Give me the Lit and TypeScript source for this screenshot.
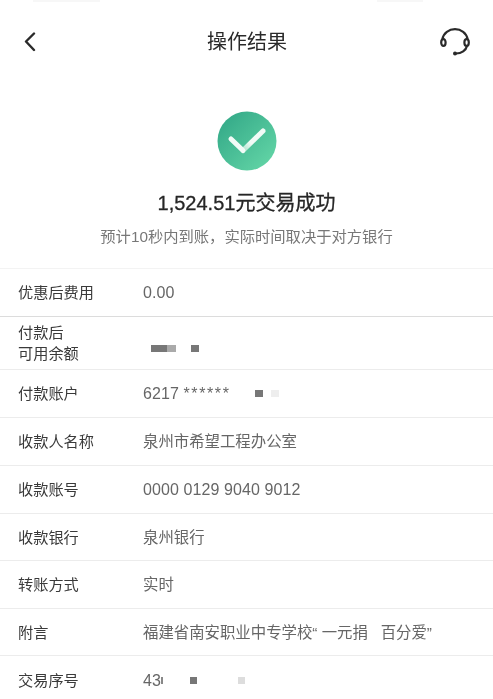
import { LitElement, html, css } from 'lit';
import { customElement } from 'lit/decorators.js';

// blobs are the mosaic patches: [width, colour, gap before]
type Blob = [number, string, number];

type Row = {
  label: string[];
  value?: string;
  stars?: string;
  blobs?: Blob[];
  h: number;
  num?: boolean;
  strong?: boolean;
  tall?: boolean;
};

const rows: Row[] = [
  { label: ['优惠后费用'], value: '0.00', num: true, h: 48, strong: true },
  { label: ['付款后', '可用余额'], blobs: [[16, '#777', 8], [9, '#aaa', 0], [8, '#777', 15]], h: 53, tall: true },
  { label: ['付款账户'], value: '6217 ', stars: '******', num: true, blobs: [[8, '#777', 24], [8, '#eee', 8]], h: 48 },
  { label: ['收款人名称'], value: '泉州市希望工程办公室', h: 48 },
  { label: ['收款账号'], value: '0000 0129 9040 9012', num: true, h: 48 },
  { label: ['收款银行'], value: '泉州银行', h: 47 },
  { label: ['转账方式'], value: '实时', h: 48 },
  { label: ['附言'], value: '福建省南安职业中专学校“ 一元捐   百分爱”', h: 47 },
  { label: ['交易序号'], value: '43', num: true, blobs: [[2, '#888', 0], [7, '#777', 27], [7, '#ddd', 41]], h: 48 },
];

@customElement('app-root')
export class AppRoot extends LitElement {
  static styles = css`
    :host {
      display: block;
      width: 493px;
      height: 699px;
      overflow: hidden;
      background: #fff;
      font-family: 'Liberation Sans', 'Noto Sans CJK SC', sans-serif;
      color: #2c2c2c;
      filter: blur(0.3px);
    }
    .status {
      height: 2px;
      display: flex;
      justify-content: space-between;
      padding: 0 70px 0 33px;
    }
    .status span {
      height: 2px;
      background: #f7f7f7;
    }
    .nav {
      height: 80px;
      display: grid;
      grid-template-columns: 1fr auto 1fr;
      align-items: center;
      padding: 0 23px 0 24px;
      box-sizing: border-box;
    }
    .nav svg { display: block; }
    .nav svg:last-child { justify-self: end; }
    .title {
      font-size: 20px;
      line-height: 24px;
      color: #2a2a2a;
    }
    .hero {
      display: flex;
      flex-direction: column;
      align-items: center;
      padding-top: 29px;
      height: 186px;
      box-sizing: border-box;
    }
    .amount {
      margin-top: 19px;
      font-size: 20px;
      line-height: 26px;
      color: #262626;
      -webkit-text-stroke: 0.3px #262626;
    }
    .sub {
      margin-top: 11px;
      font-size: 15.3px;
      line-height: 20px;
      color: #777;
    }
    .list { border-top: 1px solid #f3f3f3; }
    .row {
      display: flex;
      align-items: center;
      box-sizing: border-box;
      padding-left: 18px;
      border-bottom: 1px solid #ececec;
    }
    .row.strong { border-bottom-color: #dcdcdc; }
    .row:last-child { border-bottom: none; }
    .label {
      width: 125px;
      flex: none;
      font-size: 15.2px;
      line-height: 21px;
      color: #3a3a3a;
    }
    .value {
      display: flex;
      align-items: center;
      font-size: 15.4px;
      line-height: 21px;
      color: #666;
    }
    .value.num { font-size: 16px; letter-spacing: 0.1px; }
    .row.tall .value { margin-top: 11px; }
    .text { white-space: pre; }
    .stars { letter-spacing: 1.6px; }
    .blob {
      display: inline-block;
      height: 7px;
    }
  `;

  render() {
    return html`
      <div class="status">
        <span style="width:67px"></span>
        <span style="width:46px"></span>
      </div>
      <div class="nav">
        <svg width="16" height="20" viewBox="0 0 16 20" fill="none" stroke="#2a2a2a" stroke-width="2.4" stroke-linecap="round" stroke-linejoin="round">
          <path d="M10 1.5 L2 9.5 L10 18" />
        </svg>
        <div class="title">操作结果</div>
        <svg width="30" height="28" viewBox="0 0 30 28" fill="none" stroke="#2a2a2a" stroke-width="2.2" stroke-linecap="round">
          <path d="M2.5 11 C3.5 5 9 1.2 15 1.2 C21 1.2 26.5 5 27.5 11" />
          <ellipse cx="3.4" cy="14.5" rx="2.2" ry="3.4" />
          <ellipse cx="26.6" cy="14.5" rx="2.2" ry="3.4" />
          <path d="M27 18 C26 22.5 21.5 25.5 16 25.5" />
          <circle cx="15" cy="25.5" r="2" fill="#2a2a2a" stroke="none" />
        </svg>
      </div>
      <div class="hero">
        <svg width="60" height="60" viewBox="0 0 60 60">
          <defs>
            <linearGradient id="g" x1="0" y1="0" x2="1" y2="1">
              <stop offset="0" stop-color="#2fa585" />
              <stop offset="1" stop-color="#67d9a9" />
            </linearGradient>
            <linearGradient id="c" x1="26" y1="40" x2="46" y2="20" gradientUnits="userSpaceOnUse">
              <stop offset="0" stop-color="#a8e2c9" />
              <stop offset="0.4" stop-color="#f2fbf7" />
            </linearGradient>
          </defs>
          <circle cx="30" cy="30" r="29.5" fill="url(#g)" />
          <path d="M26 39.5 L46 20" fill="none" stroke="url(#c)" stroke-width="5" stroke-linecap="round" />
          <path d="M14 28 L26 39.5" fill="none" stroke="#f2fbf7" stroke-width="5" stroke-linecap="round" />
        </svg>
        <div class="amount">1,524.51元交易成功</div>
        <div class="sub">预计10秒内到账，实际时间取决于对方银行</div>
      </div>
      <div class="list">
        ${rows.map(r => html`
          <div class="row ${r.strong ? 'strong' : ''} ${r.tall ? 'tall' : ''}" style="height:${r.h}px">
            <div class="label">${r.label.map(l => html`<div>${l}</div>`)}</div>
            <div class="value ${r.num ? 'num' : ''}"><span class="text">${r.value ?? ''}</span>${r.stars ? html`<span class="stars">${r.stars}</span>` : ''}${(r.blobs ?? []).map(b => html`<span class="blob" style="width:${b[0]}px;background:${b[1]};margin-left:${b[2]}px"></span>`)}</div>
          </div>
        `)}
      </div>
    `;
  }
}
